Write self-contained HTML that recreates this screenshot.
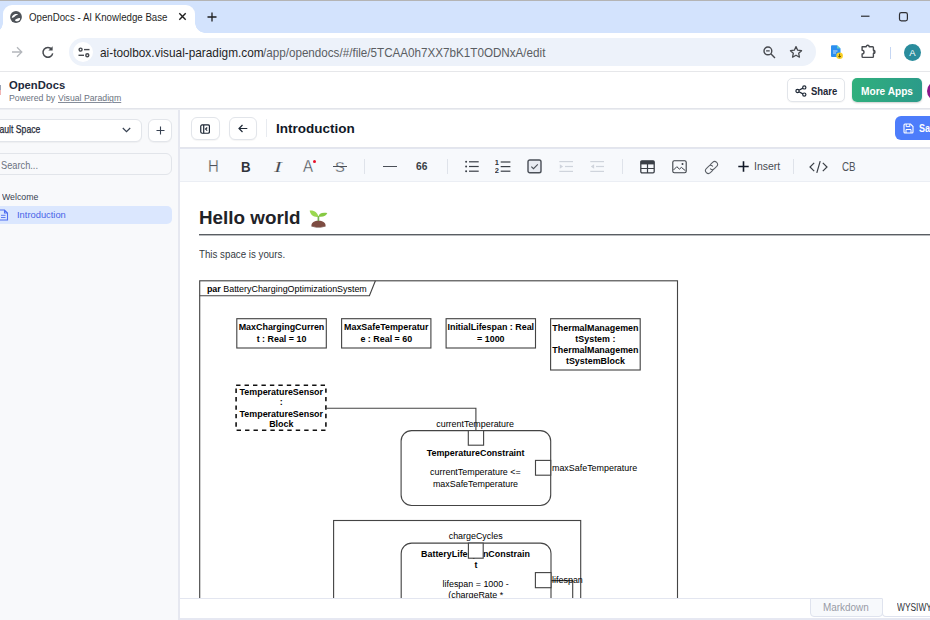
<!DOCTYPE html>
<html lang="en"><head><meta charset="utf-8"><title>OpenDocs - AI Knowledge Base</title>
<style>
*{box-sizing:border-box;margin:0;padding:0}
html,body{width:930px;height:620px;overflow:hidden;background:#fff;font-family:"Liberation Sans",sans-serif;color:#1f1f1f}
.abs,.t,svg.i{position:absolute}
.t{white-space:nowrap;transform-origin:0 0;display:block}
#tabbar{left:0;top:0;width:930px;height:33px;background:#d3e3fd}
#topline{left:0;top:0;width:930px;height:1px;background:#b4b4b4}
#tab{left:2.500px;top:5px;width:192.500px;height:28px;background:#fff;border-radius:9px 9px 0 0}
#tab:before,#tab:after{content:"";position:absolute;bottom:0;width:10px;height:10px}
#tab:before{left:-10px;background:radial-gradient(circle at 0 0,transparent 9.5px,#fff 10px)}
#tab:after{right:-10px;background:radial-gradient(circle at 100% 0,transparent 9.5px,#fff 10px)}
#addr{left:0;top:33px;width:930px;height:39px;background:#fff;border-bottom:1px solid #e6e7ea;box-shadow:0 1px 0 #f3f4f6}
#pill{left:69px;top:38px;width:747px;height:28px;border-radius:14px;background:#edf2fa}
#pillc{left:73px;top:42px;width:20px;height:20px;border-radius:10px;background:#fff}
#apphead{left:0;top:72px;width:930px;height:37px;background:#fff;border-bottom:1px solid #e2e4ea;box-shadow:0 1px 0 #eceef2}
#side{left:0;top:110px;width:180px;height:510px;background:#f8f9fb;border-right:2px solid #e6e8f0}
#dochead{left:180px;top:110px;width:750px;height:38px;background:#fff;border-bottom:1px solid #e3e5ec}
#tool{left:180px;top:148px;width:750px;height:34px;background:#f7f9fc;border-bottom:1px solid #ebeef4;border-top:1px solid #e3e6f0}
#status{left:180px;top:598px;width:750px;height:22px;background:#fff;border-top:1px solid #e3e6f0;border-bottom:2px solid #e6e8f2}
.btn{background:#fff;border:1px solid #e2e5ea;border-radius:6px;box-shadow:0 1px 1px rgba(0,0,0,.04)}
.vdiv{width:1px;background:#dfe3ea}
.box{border:1px solid #222;background:#fff}

</style></head><body>
<header class="browser-chrome">
<div id="tabbar" class="abs"></div><div id="topline" class="abs"></div>
<div id="tab" class="abs"></div>
<svg class="i" style="left:9.800px;top:10.800px" width="12" height="12" viewBox="0 0 12 12"><circle cx="6" cy="6" r="5.900" fill="#4d5258"/><path d="M1.700 6.500C2.100 5 3 3.900 4.200 3.400 5.400 2.900 7 2.900 8.200 3.300 7.400 3.900 6.600 4 5.800 4.500 5 5 4.600 5.800 3.800 6.300 3.200 6.700 2.400 6.900 1.700 6.500z" fill="#fff"/><path d="M5 9.100C5.500 8.400 6.200 8 7 7.700 7.900 7.300 8.800 7 9.700 7.100 10.200 7.300 10.200 7.900 9.900 8.400 9.500 9.100 9 9.600 8.300 9.900 7.400 10.300 6.400 10.300 5.700 10 5.200 9.800 4.900 9.500 5 9.100z" fill="#fff"/></svg>
<span class="t " style="left:29.40px;top:12.05px;font-size:11.4px;line-height:11.4px;font-weight:400;color:#1f1f1f;transform:scaleX(0.8510);">OpenDocs - AI Knowledge Base</span>
<svg class="i" style="left:178px;top:12px" width="9" height="9" viewBox="0 0 9 9"><path d="M1.300 1.300L7.700 7.700M7.700 1.300L1.300 7.700" stroke="#1f1f1f" stroke-width="1.400" fill="none"/></svg>
<svg class="i" style="left:207px;top:12px" width="10" height="10" viewBox="0 0 10 10"><path d="M5 .5v9M.5 5h9" stroke="#1f1f1f" stroke-width="1.300" fill="none"/></svg>
<svg class="i" style="left:860px;top:10px" width="50" height="14" viewBox="0 0 50 14"><path d="M1 6.200h8.500" stroke="#1f1f1f" stroke-width="1.100"/><rect x="39.500" y="2.600" width="7.900" height="8.200" rx="1.800" fill="none" stroke="#2e2f33" stroke-width="1.200"/></svg>
<div id="addr" class="abs"></div><div id="pill" class="abs"></div><div id="pillc" class="abs"></div>
<svg class="i" style="left:11px;top:46px" width="12" height="12" viewBox="0 0 12 12"><path d="M1 6h9.500M6 1.200L10.800 6 6 10.800" stroke="#b4b7bc" stroke-width="1.300" fill="none"/></svg>
<svg class="i" style="left:41px;top:45px" width="13" height="14" viewBox="0 0 13 14"><path d="M10.800 4.400A4.900 4.900 0 1 0 11.700 8.400" stroke="#474a4f" stroke-width="1.500" fill="none"/><path d="M11.600 1.200v4.200H7.400z" fill="#474a4f"/></svg>
<svg class="i" style="left:77.500px;top:46.500px" width="12" height="11" viewBox="0 0 12 11"><g stroke="#474a4f" stroke-width="1.400" fill="none"><circle cx="2.600" cy="2.600" r="1.500"/><path d="M6 2.600h5.500"/><circle cx="9.300" cy="8.300" r="1.500"/><path d="M.5 8.300h5.500"/></g></svg>
<span class="t " style="left:99.80px;top:45.97px;font-size:13.5px;line-height:13.5px;font-weight:400;color:#1f1f1f;transform:scaleX(0.8756);">ai-toolbox.visual-paradigm.com</span>
<span class="t " style="left:263.40px;top:45.97px;font-size:13.5px;line-height:13.5px;font-weight:400;color:#5a5d62;transform:scaleX(0.8631);">/app/opendocs/#/file/5TCAA0h7XX7bK1T0ODNxA/edit</span>
<svg class="i" style="left:762px;top:45px" width="14" height="14" viewBox="0 0 14 14"><g stroke="#474a4f" stroke-width="1.400" fill="none"><circle cx="5.900" cy="5.900" r="3.900"/><path d="M8.800 8.800L13 13M4.100 5.900h3.600"/></g></svg>
<svg class="i" style="left:789px;top:44.500px" width="14" height="14" viewBox="0 0 24 24"><path d="M12 2.800l2.850 6.100 6.650.8-4.900 4.600 1.300 6.600L12 17.600 6.100 20.900l1.300-6.600-4.900-4.600 6.650-.8z" fill="none" stroke="#474a4f" stroke-width="2.200" stroke-linejoin="round"/></svg>
<svg class="i" style="left:830px;top:45px" width="14" height="15" viewBox="0 0 14 15"><path d="M1 1.200Q1 .2 2 .2H7L10.500 3.600V11Q10.500 12 9.500 12H2Q1 12 1 11z" fill="#2b8ff0"/><path d="M7 .2V3.600H10.500z" fill="#63cfc4"/><path d="M3 6h4.500M3 8h3" stroke="#d2e3fc" stroke-width=".9"/><circle cx="9.600" cy="10.800" r="3.300" fill="#fbd126"/><path d="M9.600 8.800v3.200M8.200 10.900l1.400 1.400 1.400-1.400" stroke="#5b4a00" stroke-width=".9" fill="none"/></svg>
<svg class="i" style="left:860px;top:44px" width="17" height="16" viewBox="0 0 17 16"><path d="M2.100 2.700H6.200A1.500 1.500 0 0 1 9.200 2.700H12.600Q13.400 2.700 13.400 3.500V6.300A1.600 1.600 0 0 1 13.400 9.500V12.600Q13.400 13.400 12.600 13.400H2.900Q2.100 13.400 2.100 12.600V10A1.900 1.900 0 0 0 2.100 6.200Z" fill="none" stroke="#474a4f" stroke-width="1.400" stroke-linejoin="round"/><path d="M13.400 6.300A1.600 1.600 0 0 1 13.400 9.500z" fill="#474a4f"/></svg>
<div class="abs" style="left:889.500px;top:46.500px;width:1.500px;height:12px;background:#c5d6f3"></div>
<div class="abs" style="left:904px;top:44px;width:17px;height:17px;border-radius:50%;background:#2a8c9c"></div>
<span class="t " style="left:909.30px;top:47.66px;font-size:9.5px;line-height:9.5px;font-weight:400;color:#fff;">A</span>
</header>
<header class="app-header">
<div id="apphead" class="abs"></div>
<div class="abs" style="left:0;top:85px;width:1.300px;height:6px;background:#9aa3b5"></div><div class="abs" style="left:0;top:90px;width:1.200px;height:5px;background:#f0b4b4"></div>
<span class="t " style="left:9.20px;top:80.45px;font-size:11.4px;line-height:11.4px;font-weight:700;color:#1e293b;transform:scaleX(0.9857);">OpenDocs</span>
<span class="t " style="left:9.20px;top:93.39px;font-size:9.7px;line-height:9.7px;font-weight:400;color:#6b7280;transform:scaleX(0.9013);">Powered by </span>
<span class="t " style="left:57.80px;top:93.39px;font-size:9.7px;line-height:9.7px;font-weight:400;color:#6b7280;transform:scaleX(0.8984);text-decoration:underline;text-decoration-thickness:1px;text-underline-offset:.5px;text-decoration-color:#858c99;">Visual Paradigm</span>
<div class="abs btn" style="left:786.500px;top:78px;width:58px;height:24px;border-radius:5px"></div>
<svg class="i" style="left:794.500px;top:85px" width="12" height="12" viewBox="0 0 12 12"><g stroke="#1f2937" stroke-width="1.200" fill="none"><circle cx="2.500" cy="6" r="1.600"/><circle cx="9.300" cy="2.400" r="1.600"/><circle cx="9.300" cy="9.600" r="1.600"/><path d="M3.900 5.200L7.900 3.100M3.900 6.800L7.900 8.900"/></g></svg>
<span class="t " style="left:810.90px;top:85.63px;font-size:11.3px;line-height:11.3px;font-weight:700;color:#1f2937;transform:scaleX(0.8374);">Share</span>
<div class="abs" style="left:852px;top:78px;width:69.500px;height:24px;border-radius:5px;background:linear-gradient(100deg,#30b07c 0%,#2b9a8a 100%);box-shadow:0 1px 2px rgba(0,0,0,.2)"></div>
<span class="t " style="left:861.00px;top:85.63px;font-size:11.3px;line-height:11.3px;font-weight:700;color:#fff;transform:scaleX(0.8970);">More Apps</span>
<div class="abs" style="left:927px;top:80.500px;width:20px;height:20px;border-radius:50%;background:#8a168a"></div>
</header>
<aside class="sidebar">
<div id="side" class="abs"></div>
<div class="abs btn" style="left:-10px;top:119px;width:152px;height:22.600px"></div>
<span class="t " style="left:-13.60px;top:124.09px;font-size:11px;line-height:11px;font-weight:400;color:#1f2937;transform:scaleX(0.7868);-webkit-text-stroke:.25px #1f2937;">Default Space</span>
<svg class="i" style="left:122px;top:126.500px" width="9" height="6" viewBox="0 0 9 6"><path d="M.8 1l3.700 3.700L8.200 1" stroke="#374151" stroke-width="1.200" fill="none"/></svg>
<div class="abs btn" style="left:148px;top:119px;width:23.500px;height:22.600px"></div>
<svg class="i" style="left:155.500px;top:126px" width="9" height="9" viewBox="0 0 9 9"><path d="M4.500 .5v8M.5 4.500h8" stroke="#374151" stroke-width="1.100" fill="none"/></svg>
<div class="abs" style="left:-10px;top:153px;width:181.500px;height:22px;border:1px solid #e2e5ea;border-radius:6px;background:#f8f9fb"></div>
<span class="t " style="left:0.90px;top:160.03px;font-size:11.3px;line-height:11.3px;font-weight:400;color:#6b7280;transform:scaleX(0.8182);">Search...</span>
<span class="t " style="left:1.90px;top:191.86px;font-size:9.5px;line-height:9.5px;font-weight:400;color:#374151;transform:scaleX(0.9208);">Welcome</span>
<div class="abs" style="left:-10px;top:206px;width:182px;height:18px;border-radius:5px;background:#dbe7fe"></div>
<svg class="i" style="left:-2px;top:209px" width="11" height="12" viewBox="0 0 11 12"><path d="M1 1h5.500L9.500 4v7H1z M6.500 1v3h3" stroke="#4f6ef0" stroke-width="1.100" fill="none"/><path d="M3 6.300h4.500M3 8.500h4.500" stroke="#4f6ef0" stroke-width=".9"/></svg>
<span class="t " style="left:17.20px;top:210.26px;font-size:9.5px;line-height:9.5px;font-weight:400;color:#4863e8;transform:scaleX(0.9830);">Introduction</span>
</aside>
<main class="editor">
<div id="dochead" class="abs"></div>
<div class="abs btn" style="left:190.500px;top:116.500px;width:29px;height:23px"></div>
<svg class="i" style="left:199.800px;top:123.500px" width="10.200" height="10.200" viewBox="0 0 11 11"><rect x=".8" y="1" width="9.400" height="9" rx="1.500" fill="none" stroke="#1f2937" stroke-width="1.300"/><path d="M4 1v9" stroke="#1f2937" stroke-width="1.300"/><path d="M7.800 3.800L6 5.500l1.800 1.700" stroke="#1f2937" stroke-width="1.200" fill="none"/></svg>
<div class="abs btn" style="left:229px;top:116.500px;width:28px;height:23px"></div>
<svg class="i" style="left:238px;top:123.500px" width="10" height="9" viewBox="0 0 10 9"><path d="M9.300 4.500H1.200M4.500 1L1 4.500 4.500 8" stroke="#1f2937" stroke-width="1.200" fill="none"/></svg>
<div class="abs vdiv" style="left:266px;top:119px;height:18px;background:#e8ebf0"></div>
<span class="t " style="left:276.30px;top:121.90px;font-size:13px;line-height:13px;font-weight:700;color:#111827;transform:scaleX(1.0380);">Introduction</span>
<div class="abs" style="left:895px;top:116px;width:60px;height:24px;border-radius:6px;background:#4d7dfb"></div>
<svg class="i" style="left:902.500px;top:122.500px" width="11" height="11" viewBox="0 0 11 11"><path d="M1 2Q1 1 2 1H7.500L10 3.500V9Q10 10 9 10H2Q1 10 1 9z" fill="none" stroke="#fff" stroke-width="1.100"/><path d="M3.200 1v2.600h3.600V1M3 10V6.500h5V10" fill="none" stroke="#fff" stroke-width="1"/></svg>
<span class="t " style="left:919.30px;top:122.99px;font-size:11px;line-height:11px;font-weight:700;color:#fff;transform:scaleX(0.8174);">Save</span>
<div id="tool" class="abs"></div>
<span class="t " style="left:208.40px;top:159.46px;font-size:16px;line-height:16px;font-weight:400;color:#4e535a;transform:scaleX(0.9347);-webkit-text-stroke:.3px #f7f9fc;">H</span>
<span class="t " style="left:241.00px;top:158.88px;font-size:15.5px;line-height:15.5px;font-weight:700;color:#30343a;transform:scaleX(0.8576);">B</span>
<span class="t " style="left:273.60px;top:158.88px;font-size:15.5px;line-height:15.5px;font-weight:400;color:#3f444b;transform:scaleX(1.5095);font-family:'Liberation Serif',serif;font-style:italic;-webkit-text-stroke:.15px #f7f9fc;">I</span>
<span class="t " style="left:302.80px;top:159.46px;font-size:16px;line-height:16px;font-weight:400;color:#454a51;transform:scaleX(0.9370);-webkit-text-stroke:.3px #f7f9fc;">A</span>
<div class="abs" style="left:313.200px;top:159.800px;width:3.200px;height:3.200px;border-radius:50%;background:#e8102a"></div>
<span class="t " style="left:334.60px;top:158.88px;font-size:15.5px;line-height:15.5px;font-weight:400;color:#4a4f57;transform:scaleX(0.9479);-webkit-text-stroke:.3px #f7f9fc;">S</span>
<div class="abs" style="left:332.500px;top:166px;width:14px;height:1.200px;background:#4a4f57"></div>
<div class="abs vdiv" style="left:364px;top:158.500px;height:15px"></div>
<div class="abs" style="left:383.200px;top:165.600px;width:13.500px;height:1.300px;background:#4a4f57"></div>
<span class="t " style="left:415.60px;top:161.53px;font-size:10px;line-height:10px;font-weight:700;color:#3a3f46;transform:scaleX(1.0249);">66</span>
<div class="abs vdiv" style="left:446.500px;top:158.500px;height:15px"></div>
<svg class="i" style="left:465px;top:159.500px" width="14" height="13" viewBox="0 0 14 13"><g fill="#3a3f46"><circle cx="1.100" cy="1.800" r="1"/><circle cx="1.100" cy="6.500" r="1"/><circle cx="1.100" cy="11.200" r="1"/><rect x="4" y="1.200" width="9.700" height="1.200"/><rect x="4" y="5.900" width="9.700" height="1.200"/><rect x="4" y="10.600" width="9.700" height="1.200"/></g></svg>
<svg class="i" style="left:495px;top:158.500px" width="16" height="15" viewBox="0 0 16 15"><g fill="#3a3f46"><rect x="5.700" y="2.400" width="9.700" height="1.200"/><rect x="5.700" y="7" width="9.700" height="1.200"/><rect x="5.700" y="11.600" width="9.700" height="1.200"/></g><text x="-.2" y="6.400" font-family="Liberation Sans,sans-serif" font-size="7.500" font-weight="700" fill="#30343a">1</text><text x="-.2" y="14.400" font-family="Liberation Sans,sans-serif" font-size="7.500" font-weight="700" fill="#30343a">2</text></svg>
<svg class="i" style="left:527px;top:159px" width="15" height="15" viewBox="0 0 15 15"><rect x="1" y="1" width="13" height="12.800" rx="1.800" fill="#e8ebf2" stroke="#4a4f57" stroke-width="1.400"/><path d="M4.300 7.600l2.200 2.100 4.300-4.300" stroke="#4a4f57" stroke-width="1.100" fill="none"/></svg>
<svg class="i" style="left:559px;top:159.500px" width="15" height="13" viewBox="0 0 15 13"><g fill="#cfd4dc"><rect x=".3" y="1" width="13.700" height="1.200"/><rect x="6" y="5.900" width="8" height="1.200"/><rect x=".3" y="10.800" width="13.700" height="1.200"/><path d="M.8 4.300l3.300 2.200L.8 8.700z"/></g></svg>
<svg class="i" style="left:590px;top:159.500px" width="15" height="13" viewBox="0 0 15 13"><g fill="#cfd4dc"><rect x=".3" y="1" width="13.700" height="1.200"/><rect x="6" y="5.900" width="8" height="1.200"/><rect x=".3" y="10.800" width="13.700" height="1.200"/><path d="M4.100 4.300L.8 6.500l3.300 2.200z"/></g></svg>
<div class="abs vdiv" style="left:622px;top:158.500px;height:15px"></div>
<svg class="i" style="left:640px;top:160px" width="15" height="14" viewBox="0 0 15 14"><rect x=".8" y=".8" width="13.400" height="12" rx="1.200" fill="none" stroke="#3a3f46" stroke-width="1.300"/><rect x=".8" y=".8" width="13.400" height="3.600" fill="#3a3f46"/><path d="M7.500 1v12M1 8.500h13" stroke="#3a3f46" stroke-width="1.200"/></svg>
<svg class="i" style="left:672px;top:160px" width="15" height="14" viewBox="0 0 15 14"><rect x=".8" y=".8" width="13.400" height="12" rx="1.500" fill="none" stroke="#3a3f46" stroke-width="1.100"/><path d="M1.500 10l3.300-3.300 2.600 2.400 2-1.700 4 3.300" fill="none" stroke="#3a3f46" stroke-width="1"/><circle cx="10.500" cy="4" r="1" fill="#3a3f46"/></svg>
<svg class="i" style="left:703.500px;top:159.500px" width="15" height="15" viewBox="0 0 15 15"><g fill="none" stroke="#5a5f66" stroke-width="1.050" stroke-linecap="round"><path d="M6.300 4.600l2.300-2.300a2.900 2.900 0 0 1 4.100 4.100l-2.300 2.300a2.900 2.900 0 0 1-4 .1"/><path d="M8.700 10.400l-2.300 2.300a2.900 2.900 0 0 1-4.100-4.100l2.300-2.300a2.900 2.900 0 0 1 4-.1"/></g></svg>
<svg class="i" style="left:737.500px;top:161px" width="11" height="11" viewBox="0 0 11 11"><path d="M5.500 .3v10.400M.3 5.500h10.400" stroke="#111827" stroke-width="1.600"/></svg>
<span class="t " style="left:753.60px;top:161.16px;font-size:10.8px;line-height:10.8px;font-weight:400;color:#474c53;transform:scaleX(0.9700);">Insert</span>
<div class="abs vdiv" style="left:793px;top:158.500px;height:15px"></div>
<svg class="i" style="left:809px;top:159.500px" width="19" height="14" viewBox="0 0 19 14"><path d="M5.200 2.800L1 7l4.200 4.200M13.800 2.800L18 7l-4.200 4.200M11.200 1.200L7.800 12.800" stroke="#3a3f46" stroke-width="1.200" fill="none"/></svg>
<span class="t " style="left:842.40px;top:160.72px;font-size:12.5px;line-height:12.5px;font-weight:400;color:#4f545b;transform:scaleX(0.7832);">CB</span>
<div id="status" class="abs"></div>
<div class="abs" style="left:810px;top:598px;width:72.500px;height:18.500px;background:#f7f9fc;border:1px solid #dfe3ee;border-radius:0 0 4px 4px"></div>
<span class="t " style="left:823.20px;top:602.53px;font-size:10px;line-height:10px;font-weight:400;color:#979ba6;transform:scaleX(0.9929);">Markdown</span>
<div class="abs" style="left:882px;top:598px;width:60px;height:18.500px;background:#fff;border:1px solid #dfe3ee;border-top-color:#fff;border-radius:0 0 4px 4px"></div>
<span class="t " style="left:896.50px;top:602.53px;font-size:10px;line-height:10px;font-weight:400;color:#30343a;transform:scaleX(0.8393);">WYSIWYG</span>
<div id="content" class="abs" style="left:181px;top:182px;width:749px;height:416px;overflow:hidden;background:#fff">
<span class="t " style="left:17.60px;top:26.96px;font-size:18px;line-height:18px;font-weight:700;color:#1f2328;transform:scaleX(1.0463);">Hello world</span>
<svg class="i" role="img" aria-label="seedling" style="left:127.5px;top:26.5px" width="19" height="19" viewBox="0 0 19 19"><path d="M9.400 12.500V7" stroke="#77b255" stroke-width="1.700" fill="none"/><path d="M9.300 7.900C8.900 3.600 5.100 .9 .7 1.500 1.100 5.700 4.800 8.500 9.300 7.900z" fill="#9ad84f"/><path d="M9.500 7.500C9.700 4.700 13 2.900 18.300 4.100 17.500 6.900 13.600 8.300 9.500 7.500z" fill="#86c943"/><path d="M2.400 16.700C2.400 13.500 5.400 11.700 9.500 11.700S16.600 13.500 16.600 16.700C16.600 18.400 2.400 18.400 2.400 16.700z" fill="#7d4c42"/><path d="M2.400 16.700c0 1.700 14.200 1.700 14.200 0 0 .5-.2.800-.6 1.100-2.500 1-10.500 1-13 0-.4-.3-.6-.6-.6-1.100z" fill="#5f382f"/></svg>
<div class="abs" style="left:18px;top:52px;width:740px;height:1px;background:#5a5e63;box-shadow:0 1px 0 #b9bbbe"></div>
<span class="t " style="left:18.30px;top:67.57px;font-size:10.2px;line-height:10.2px;font-weight:400;color:#333a42;transform:scaleX(0.9564);">This space is yours.</span>
<svg class="i" style="left:0;top:0" width="749" height="416" viewBox="181 182 749 416" font-family="Liberation Sans,sans-serif" font-size="8.920" fill="#000" shape-rendering="auto"><g fill="none" stroke="#444" stroke-width="1.120"><rect x="199.700" y="280.800" width="477.800" height="400"/><path d="M199.700 295.700H369.400L375.400 280.800"/><rect x="236.8" y="318.7" width="89.5" height="29.3" fill="#fff"/><rect x="341.6" y="318.7" width="89.3" height="29.3" fill="#fff"/><rect x="446.1" y="318.7" width="89.4" height="29.3" fill="#fff"/><rect x="550.6" y="318.7" width="89.6" height="51.3" fill="#fff"/><rect x="236.100" y="385.300" width="89.800" height="45" stroke="#111" stroke-width="1.600" stroke-dasharray="4.400 4.050"/><path d="M325.900 408.300H475.900V430.600"/><rect x="401.100" y="430.600" width="149.600" height="74.900" rx="10.500" fill="#fff"/><rect x="468.300" y="430.600" width="15.300" height="14.600" fill="#fff"/><rect x="535.500" y="460.400" width="15.200" height="14.800" fill="#fff"/><rect x="333.600" y="520.500" width="247.100" height="200"/><rect x="401.200" y="543.100" width="149.800" height="150" rx="10.500" fill="#fff"/><path d="M551 580.600H572.700V700"/></g><text x="206.900" y="292.300"><tspan font-weight="700">par</tspan> BatteryChargingOptimizationSystem</text><text x="281.5" y="330.3" text-anchor="middle" font-weight="700">MaxChargingCurren</text><text x="281.5" y="341.5" text-anchor="middle" font-weight="700">t : Real = 10</text><text x="386.3" y="330.3" text-anchor="middle" font-weight="700">MaxSafeTemperatur</text><text x="386.3" y="341.5" text-anchor="middle" font-weight="700">e : Real = 60</text><text x="490.8" y="330.3" text-anchor="middle" font-weight="700">InitialLifespan : Real</text><text x="490.8" y="341.5" text-anchor="middle" font-weight="700">= 1000</text><text x="595.4" y="331" text-anchor="middle" font-weight="700">ThermalManagemen</text><text x="595.4" y="341.8" text-anchor="middle" font-weight="700">tSystem :</text><text x="595.4" y="352.7" text-anchor="middle" font-weight="700">ThermalManagemen</text><text x="595.4" y="363.5" text-anchor="middle" font-weight="700">tSystemBlock</text><text x="281.3" y="394.8" text-anchor="middle" font-weight="700">TemperatureSensor</text><text x="281.3" y="404.7" text-anchor="middle" font-weight="700">:</text><text x="281.3" y="416.6" text-anchor="middle" font-weight="700">TemperatureSensor</text><text x="281.3" y="426.5" text-anchor="middle" font-weight="700">Block</text><text x="475.1" y="426.5" text-anchor="middle">currentTemperature</text><text x="475.6" y="455.7" text-anchor="middle" font-weight="700">TemperatureConstraint</text><text x="475.4" y="474.8" text-anchor="middle">currentTemperature &lt;=</text><text x="475.5" y="487.1" text-anchor="middle">maxSafeTemperature</text><text x="552" y="471.1" text-anchor="start">maxSafeTemperature</text><text x="475.7" y="539.1" text-anchor="middle">chargeCycles</text><text x="475.5" y="557.3" text-anchor="middle" font-weight="700">BatteryLifespanConstrain</text><text x="475.9" y="568.2" text-anchor="middle" font-weight="700">t</text><rect x="468.400" y="543.100" width="14.800" height="15.100" fill="#fff" stroke="#444" stroke-width="1.120"/><rect x="535.400" y="572.600" width="15.600" height="15.100" fill="#fff" stroke="#444" stroke-width="1.120"/><text x="475.6" y="587.3" text-anchor="middle">lifespan = 1000 -</text><text x="475.7" y="598.3" text-anchor="middle">(chargeRate *</text><text x="552.1" y="583.2" text-anchor="start">lifespan</text></svg>
</div>
</main>
</body></html>
